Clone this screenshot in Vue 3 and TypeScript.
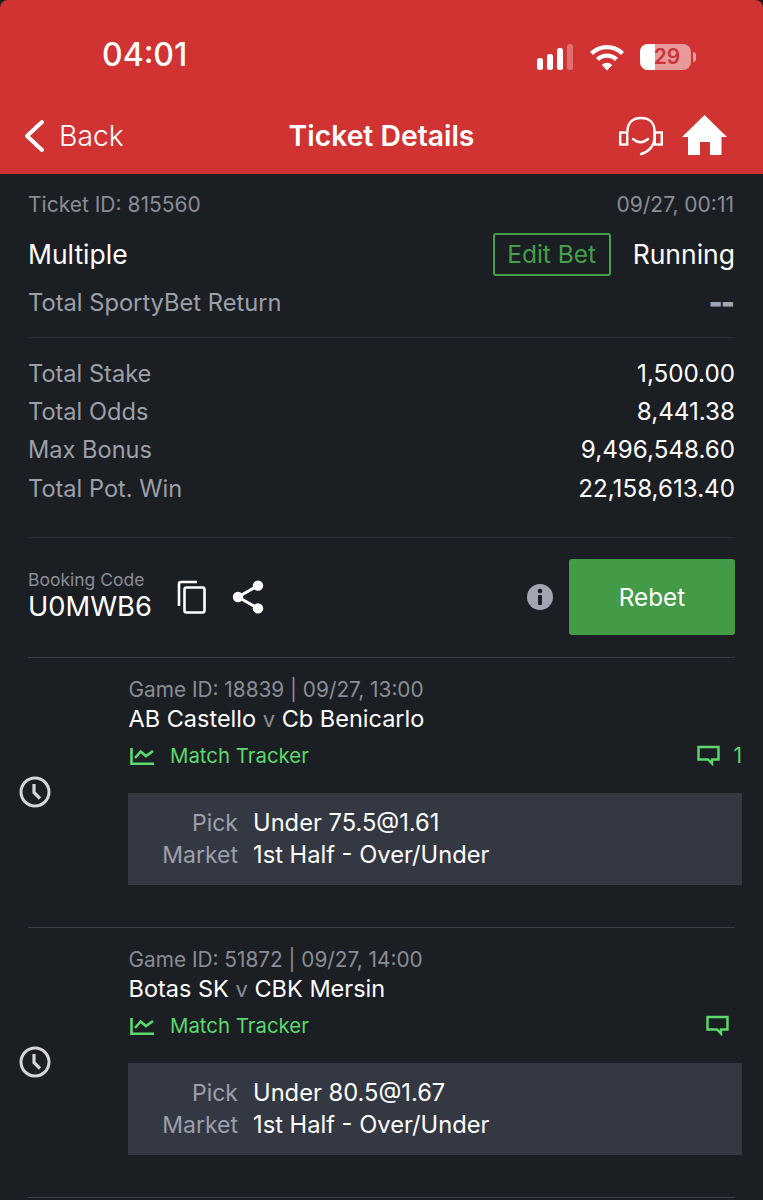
<template>
  <div class="page">
    <header class="top">
      <div class="status">
        <span class="clock">04:01</span>
        <div class="status-icons">
          <svg width="40" height="26" viewBox="0 0 40 26">
            <rect x="1" y="14" width="6" height="12" rx="2.5" fill="#fff" />
            <rect x="11" y="10" width="6" height="16" rx="2.5" fill="#fff" />
            <rect x="21" y="4" width="6" height="22" rx="2.5" fill="#fff" />
            <rect x="31" y="0" width="6" height="26" rx="2.5" fill="#fff" opacity="0.3" />
          </svg>
          <svg class="wifi" width="36" height="28" viewBox="0 0 36 28" fill="none" stroke="#fff" stroke-width="4.4">
            <path d="M2.5 10.500a22 22 0 0 1 31 0" />
            <path d="M8.500 16.500a13.500 13.500 0 0 1 19 0" />
            <path d="M18 27.500l-5.200-5.600a7.400 7.400 0 0 1 10.400 0z" fill="#fff" stroke="none" />
          </svg>
          <div class="battery"><span class="battery-fill"></span><span class="battery-num">29</span></div>
          <span class="battery-cap"></span>
        </div>
      </div>
      <nav class="nav">
        <div class="back">
          <svg width="24" height="34" viewBox="0 0 24 34" fill="none" stroke="#fff" stroke-width="4" stroke-linecap="round" stroke-linejoin="round">
            <path d="M20 3L5 17l15 14" />
          </svg>
          <span>Back</span>
        </div>
        <h1>Ticket Details</h1>
        <div class="nav-icons">
          <svg width="46" height="42" viewBox="0 0 46 42" fill="none" stroke="#fff" stroke-width="2.4">
            <path d="M9.500 16C9.500 7 15.500 3 23 3s13.500 4 13.500 13v6c0 9-6 15-13.500 17" stroke-linecap="round" />
            <rect x="2.200" y="17.500" width="7" height="12" />
            <rect x="36.800" y="17.500" width="7" height="12" />
            <path d="M15 24q7.500 6.500 15 0" stroke-linecap="round" />
          </svg>
          <svg width="46" height="42" viewBox="0 0 46 42" fill="#fff">
            <path d="M22.500 0L45 22H39.500V40H28V27H18V40H6V22H0Z" />
          </svg>
        </div>
      </nav>
    </header>

    <main class="body">
      <div class="row id-row">
        <span>Ticket ID: 815560</span>
        <span class="id-date">09/27, 00:11</span>
      </div>
      <div class="row type-row">
        <span class="type">Multiple</span>
        <div class="type-right">
          <button class="edit">Edit Bet</button>
          <span class="type">Running</span>
        </div>
      </div>
      <div class="row return-row">
        <span>Total SportyBet Return</span>
        <span class="dashes">--</span>
      </div>

      <div class="totals">
        <div v-for="t in totals" :key="t.label" class="row total">
          <span class="muted">{{ t.label }}</span>
          <span>{{ t.value }}</span>
        </div>
      </div>

      <div class="booking">
        <div class="code">
          <span class="code-label">Booking Code</span>
          <span class="code-value">U0MWB6</span>
        </div>
        <svg class="copy" width="30" height="34" viewBox="0 0 30 34" fill="none" stroke="#fff" stroke-width="2.6">
          <path d="M2 26V4a2 2 0 0 1 2-2h16" />
          <rect x="7.500" y="7.500" width="20" height="25" rx="2" />
        </svg>
        <svg class="share" width="32" height="34" viewBox="0 0 32 34" fill="#fff">
          <circle cx="6" cy="17" r="5.200" />
          <circle cx="26" cy="5.600" r="5.200" />
          <circle cx="26" cy="28.400" r="5.200" />
          <path d="M6 17L26 5.600M6 17l20 11.400" stroke="#fff" stroke-width="3" />
        </svg>
        <svg class="info" width="26" height="26" viewBox="0 0 26 26">
          <circle cx="13" cy="13" r="13" fill="#a3a5b3" />
          <rect x="11" y="11" width="4" height="10" rx="1" fill="#1b1e23" />
          <circle cx="13" cy="7" r="2.300" fill="#1b1e23" />
        </svg>
        <button class="rebet">Rebet</button>
      </div>

      <section v-for="g in games" :key="g.id" class="game">
        <svg class="clock-icon" width="32" height="32" viewBox="0 0 32 32" fill="none" stroke="#d6d6d8" stroke-width="3">
          <circle cx="16" cy="16" r="14" />
          <path d="M15 8v8.500l6 6" stroke-width="3.200" />
        </svg>
        <div class="game-main">
          <div class="game-id">Game ID: {{ g.id }} | {{ g.time }}</div>
          <div class="teams">{{ g.home }} <span class="v">v</span> {{ g.away }}</div>
          <div class="tracker-row">
            <svg width="24" height="18" viewBox="0 0 24 18" fill="none" stroke="#5cd96c" stroke-width="2.600">
              <path d="M1.500 1v15.700H24" />
              <path d="M5 11l5.700-6.500L16 9l7-5" />
            </svg>
            <span class="tracker">Match Tracker</span>
            <span class="comments">
              <svg width="23" height="21" viewBox="0 0 23 21" fill="none" stroke="#5cd96c" stroke-width="2.400">
                <path d="M1.500 2h20v12.500h-6.500v4l-4-4h-9.500z" />
              </svg>
              <span v-if="g.comments" class="comment-count">{{ g.comments }}</span>
            </span>
          </div>
          <div class="pick-box">
            <div class="pick-row"><span class="pick-label">Pick</span><span>{{ g.pick }}</span></div>
            <div class="pick-row"><span class="pick-label">Market</span><span>{{ g.market }}</span></div>
          </div>
        </div>
      </section>
    </main>
  </div>
</template>

<script setup lang="ts">
const totals = [
  { label: 'Total Stake', value: '1,500.00' },
  { label: 'Total Odds', value: '8,441.38' },
  { label: 'Max Bonus', value: '9,496,548.60' },
  { label: 'Total Pot. Win', value: '22,158,613.40' },
]

const games = [
  {
    id: '18839',
    time: '09/27, 13:00',
    home: 'AB Castello',
    away: 'Cb Benicarlo',
    comments: 1,
    pick: 'Under 75.5@1.61',
    market: '1st Half - Over/Under',
  },
  {
    id: '51872',
    time: '09/27, 14:00',
    home: 'Botas SK',
    away: 'CBK Mersin',
    comments: 0,
    pick: 'Under 80.5@1.67',
    market: '1st Half - Over/Under',
  },
]
</script>

<style>
html,
body {
  background: #1b1e23;
}
</style>

<style scoped>
.page {
  height: 1200px;
  overflow: hidden;
  background: #1b1e23;
  color: #fff;
  font-family: Inter, 'Noto Sans', sans-serif;
}
.top {
  height: 174px;
  box-sizing: border-box;
  background: #d13333;
  border-radius: 8px 8px 0 0;
}
.status {
  height: 110px;
  padding: 36px 67px 0 102px;
  box-sizing: border-box;
  display: flex;
  justify-content: space-between;
  align-items: flex-start;
}
.clock {
  font-size: 32px;
  font-weight: 500;
  line-height: 38px;
}
.status-icons {
  display: flex;
  align-items: center;
  margin-top: 7px;
}
.wifi {
  margin-left: 13px;
}
.battery {
  position: relative;
  width: 51px;
  height: 26px;
  margin-left: 15px;
  border-radius: 8px;
  overflow: hidden;
  background: rgba(255, 255, 255, 0.5);
}
.battery-fill {
  display: block;
  width: 15px;
  height: 100%;
  background: #fff;
}
.battery-num {
  position: absolute;
  inset: 0;
  padding-left: 3px;
  text-align: center;
  font-size: 21px;
  font-weight: 600;
  line-height: 26px;
  color: #c9343a;
}
.battery-cap {
  width: 3px;
  height: 10px;
  margin-left: 2px;
  border-radius: 0 3px 3px 0;
  background: rgba(255, 255, 255, 0.5);
}
.nav {
  display: flex;
  align-items: center;
  justify-content: space-between;
  position: relative;
  height: 52px;
  padding: 0 35px 0 22px;
}
.back {
  display: flex;
  align-items: center;
  gap: 13px;
  font-size: 28.300px;
  font-weight: 300;
}
.nav h1 {
  position: absolute;
  left: 0;
  right: 0;
  margin: 0;
  text-align: center;
  font-size: 28.300px;
  font-weight: 600;
}
.nav-icons {
  display: flex;
  gap: 18px;
  align-items: center;
}
.body {
  padding: 0 28px;
  font-size: 24.200px;
}
.row {
  display: flex;
  justify-content: space-between;
  align-items: center;
}
.id-row {
  padding-top: 17px;
  height: 27px;
  font-size: 21px;
  color: #8a8d96;
}
.id-date {
  margin-right: 1px;
}
.type-row {
  height: 50px;
  margin-top: 11px;
}
.type {
  font-size: 26.500px;
}
.type-right {
  display: flex;
  align-items: center;
  gap: 22px;
}
.edit {
  width: 118px;
  height: 43px;
  padding: 0;
  background: none;
  border: 2px solid #43a047;
  border-radius: 3px;
  color: #43a047;
  font: inherit;
  font-size: 24.500px;
}
.return-row {
  height: 46px;
  padding-bottom: 12px;
  border-bottom: 1px solid #2b2e36;
  color: #9ca0aa;
  font-size: 23.700px;
}
.dashes {
  margin-right: 2px;
  font-size: 30px;
  font-weight: 900;
  letter-spacing: -2px;
  color: #a3a5b3;
}
.totals {
  padding: 16px 0 29.800px;
  border-bottom: 1px solid #2b2e36;
}
.total {
  height: 38.300px;
}
.muted {
  font-size: 23.600px;
  color: #9ca0aa;
}
.booking {
  display: flex;
  align-items: center;
  height: 119px;
  border-bottom: 1px solid #3a3d46;
}
.code {
  display: flex;
  flex-direction: column;
}
.code-label {
  font-size: 17.500px;
  line-height: 20px;
  color: #8a8d96;
}
.code-value {
  font-size: 27.300px;
  line-height: 34px;
}
.copy {
  margin-left: 25px;
}
.share {
  margin-left: 25px;
}
.info {
  margin-left: auto;
}
.rebet {
  width: 166px;
  height: 76px;
  margin-left: 16px;
  padding: 0;
  border: 0;
  border-radius: 3px;
  background: #439a47;
  color: #fff;
  font: inherit;
  font-size: 24.300px;
}
.game {
  position: relative;
  display: flex;
  height: 270px;
  box-sizing: border-box;
  border-bottom: 1px solid #3a3d46;
}
.clock-icon {
  position: absolute;
  left: -9px;
  top: 118px;
}
.game-main {
  flex: 1;
  margin-left: 100px;
  margin-right: -7px;
  padding-top: 19px;
}
.game-id {
  padding-left: 0.5px;
  font-size: 20.800px;
  line-height: 25px;
  color: #8a8d96;
}
.teams {
  padding-left: 0.5px;
  font-size: 23.500px;
  line-height: 34px;
}
.v {
  font-size: 22px;
  color: #8a8d96;
}
.tracker-row {
  display: flex;
  align-items: center;
  height: 36px;
  margin-top: 2px;
  padding-left: 2px;
}
.tracker {
  margin-left: 16px;
  font-size: 20.400px;
  color: #5cd96c;
}
.comments {
  display: flex;
  align-items: center;
  gap: 13px;
  margin-left: auto;
  margin-right: 13px;
  color: #5cd96c;
  font-size: 21px;
}
.comment-count {
  margin-right: -13px;
}
.pick-box {
  height: 92px;
  margin-top: 19px;
  box-sizing: border-box;
  padding: 14px 0;
  background: #343843;
}
.pick-row {
  display: flex;
  align-items: center;
  height: 32px;
  font-size: 23.700px;
}
.pick-label {
  width: 110px;
  margin-right: 15px;
  font-size: 23px;
  text-align: right;
  color: #9ca0aa;
}
</style>
